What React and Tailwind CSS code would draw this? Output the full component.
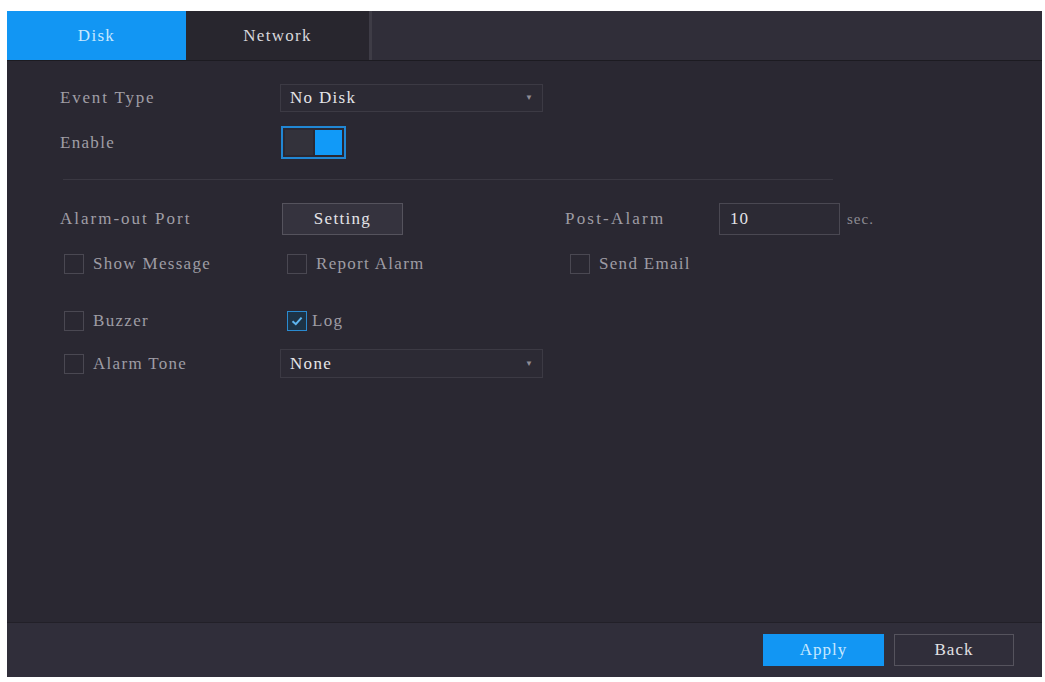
import React from "react";

const serif = { fontFamily: '"Liberation Serif", "Times New Roman", serif' };

function Checkbox({ checked }) {
  return (
    <span
      className={
        "flex h-[20px] w-[20px] shrink-0 items-center justify-center border " +
        (checked ? "border-[#2a8ad0] bg-[#1d3346]" : "border-[#4a4852] bg-[#2a2832]")
      }
    >
      {checked && (
        <svg width="14" height="14" viewBox="0 0 14 14">
          <path d="M2.5 7.2 L5.8 10.2 L11.6 3.6" fill="none" stroke="#5fb6f0" strokeWidth="2" />
        </svg>
      )}
    </span>
  );
}

function Check({ checked, label, className = "" }) {
  return (
    <div className={"flex items-center " + className}>
      <Checkbox checked={checked} />
      <span className="ml-[9px] text-[17px] tracking-[1.3px] text-[#9e9ca4]">{label}</span>
    </div>
  );
}

function Select({ value }) {
  return (
    <div className="flex h-full w-[263px] items-center justify-between border border-[#3c3a44] bg-[#2c2a34] pl-[9px] pr-[9px]">
      <span className="text-[17px] tracking-[1.3px] text-[#e4e4e8]">{value}</span>
      <span className="text-[8px] text-[#8e8c94]">▼</span>
    </div>
  );
}

export default function App() {
  return (
    <div className="min-h-[682px] w-[1045px] bg-white pl-[7px] pt-[11px]" style={serif}>
      <div className="flex h-[666px] w-[1035px] flex-col bg-[#2a2832]">
        {/* tabs */}
        <div className="flex h-[49px] shrink-0 bg-[#302e39]">
          <div className="flex w-[179px] items-center justify-center bg-[#1296f3] text-[17px] tracking-[1.3px] text-[#c7e8ff]">
            Disk
          </div>
          <div className="flex w-[183px] items-center justify-center bg-[#28262e] text-[17px] tracking-[1.3px] text-[#d8d8dc]">
            Network
          </div>
          <div className="w-[3px] bg-[#3e3c46]" />
        </div>
        <div className="h-px bg-[#1c1b21]" />

        {/* content */}
        <div className="flex-1">
          <div className="ml-[53px] mt-[23px] flex h-[28px] items-center">
            <span className="w-[220px] text-[17px] tracking-[1.8px] text-[#a09ea6]">Event Type</span>
            <Select value="No Disk" />
          </div>

          <div className="ml-[53px] mt-[14px] flex h-[33px] items-center">
            <span className="w-[221px] text-[17px] tracking-[1.3px] text-[#a09ea6]">Enable</span>
            <div className="flex h-[33px] w-[65px] items-stretch gap-[2px] border-2 border-[#2187d4] p-[2px]">
              <div className="flex-1 bg-[#33323b]" />
              <div className="w-[27px] bg-[#119af8]" />
            </div>
          </div>

          <div className="ml-[56px] mt-[20px] h-px w-[770px] bg-[#3a3842]" />

          <div className="ml-[53px] mt-[23px] flex h-[32px] items-center">
            <span className="w-[222px] text-[17px] tracking-[2px] text-[#a09ea6]">Alarm-out Port</span>
            <div className="flex h-[32px] w-[121px] items-center justify-center border border-[#55535d] bg-[#35333e] text-[17px] tracking-[1.3px] text-[#e4e4e8]">
              Setting
            </div>
            <span className="ml-[162px] w-[154px] text-[17px] tracking-[2.2px] text-[#9e9ca4]">Post-Alarm</span>
            <div className="flex h-[32px] w-[121px] items-center border border-[#4a4852] bg-[#2c2a34] pl-[10px] text-[17px] tracking-[1px] text-[#e4e4e8]">
              10
            </div>
            <span className="ml-[7px] text-[15px] tracking-[1px] text-[#8e8c94]">sec.</span>
          </div>

          <div className="ml-[57px] mt-[19px] flex h-[20px] items-center">
            <Check label="Show Message" className="w-[223px]" />
            <Check label="Report Alarm" className="w-[283px]" />
            <Check label="Send Email" />
          </div>

          <div className="ml-[57px] mt-[37px] flex h-[20px] items-center">
            <Check label="Buzzer" className="w-[223px]" />
            <div className="flex items-center">
              <Checkbox checked />
              <span className="ml-[5px] text-[17px] tracking-[1.3px] text-[#9e9ca4]">Log</span>
            </div>
          </div>

          <div className="ml-[57px] mt-[18px] flex h-[29px] items-center">
            <Check label="Alarm Tone" className="w-[216px]" />
            <Select value="None" />
          </div>
        </div>

        {/* bottom bar */}
        <div className="h-px bg-[#222028]" />
        <div className="flex h-[54px] shrink-0 items-center justify-end bg-[#302e3a] pr-[28px]">
          <div className="flex h-[32px] w-[121px] items-center justify-center bg-[#1296f3] text-[17px] tracking-[1px] text-[#c7e8ff]">
            Apply
          </div>
          <div className="ml-[10px] flex h-[32px] w-[120px] items-center justify-center border border-[#55535d] text-[17px] tracking-[1px] text-[#e0e0e4]">
            Back
          </div>
        </div>
      </div>
    </div>
  );
}
